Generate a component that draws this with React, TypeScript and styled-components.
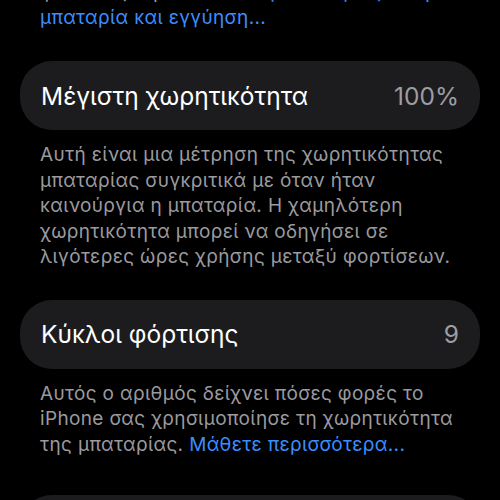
import React from "react";
import styled, { createGlobalStyle } from "styled-components";

const Global = createGlobalStyle`
  html, body {
    margin: 0;
    padding: 0;
    background: #000;
    overflow: hidden;
  }
  body {
    font-family: Inter, "Noto Sans", "Liberation Sans", sans-serif;
    -webkit-font-smoothing: antialiased;
  }
`;

const Viewport = styled.div`
  width: 500px;
  height: 500px;
  overflow: hidden;
  background: #000;
`;

const Page = styled.div`
  margin-top: -21px;
  padding: 0 20px;
  display: flex;
  flex-direction: column;
`;

const Footer = styled.p<{ $gapAfter: number }>`
  margin: 0 0 ${(p) => p.$gapAfter}px;
  padding: 0 20px;
  font-size: 19px;
  line-height: 25.5px;
  color: #9a9a9f;
  letter-spacing: 0.35px;
  white-space: nowrap;
`;

const Link = styled.span`
  color: #3a8dff;
`;

const Card = styled.div<{ $gapAfter: number }>`
  height: 69px;
  margin-bottom: ${(p) => p.$gapAfter}px;
  border-radius: 32px;
  background: #1c1c1e;
  display: flex;
  align-items: center;
  justify-content: space-between;
  padding: 0 21px;
  box-sizing: border-box;
`;

const Title = styled.span`
  font-size: 24.5px;
  color: #fff;
`;

const Value = styled.span`
  font-size: 24.5px;
  color: #9d9da2;
`;

export default function App() {
  return (
    <Viewport>
      <Global />
      <Page>
        <Footer $gapAfter={31}>
          φυσιολογική. <Link>Μάθετε περισσότερα για την</Link>
          <br />
          <Link>μπαταρία και εγγύηση...</Link>
        </Footer>
        <Card $gapAfter={12}>
          <Title>Μέγιστη χωρητικότητα</Title>
          <Value>100%</Value>
        </Card>
        <Footer $gapAfter={30}>
          Αυτή είναι μια μέτρηση της χωρητικότητας
          <br />
          μπαταρίας συγκριτικά με όταν ήταν
          <br />
          καινούργια η μπαταρία. Η χαμηλότερη
          <br />
          χωρητικότητα μπορεί να οδηγήσει σε
          <br />
          λιγότερες ώρες χρήσης μεταξύ φορτίσεων.
        </Footer>
        <Card $gapAfter={12}>
          <Title>Κύκλοι φόρτισης</Title>
          <Value>9</Value>
        </Card>
        <Footer $gapAfter={38}>
          Αυτός ο αριθμός δείχνει πόσες φορές το
          <br />
          iPhone σας χρησιμοποίησε τη χωρητικότητα
          <br />
          της μπαταρίας. <Link>Μάθετε περισσότερα...</Link>
        </Footer>
        <Card $gapAfter={0} />
      </Page>
    </Viewport>
  );
}
